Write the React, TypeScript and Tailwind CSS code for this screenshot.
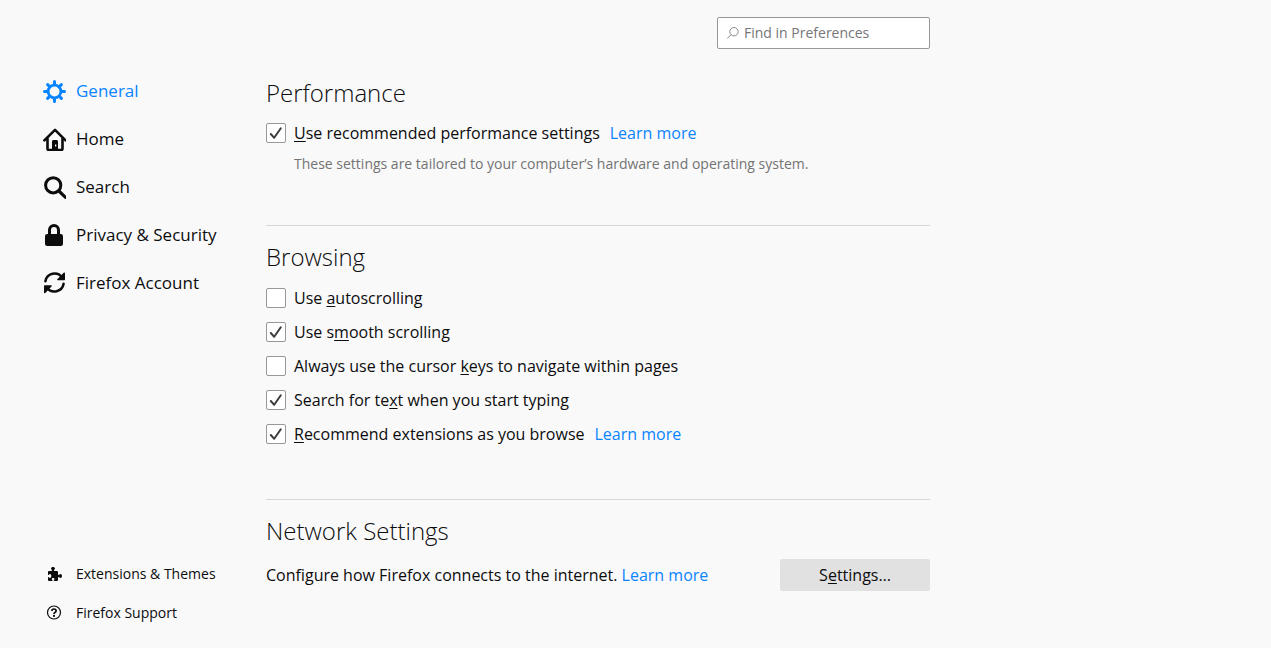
import { useState } from 'react';
import type { ReactNode } from 'react';

function GearIcon() {
  return (
    <svg viewBox="0 0 24 24" className="size-6" fill="none" stroke="currentColor" strokeLinecap="round">
      <circle cx="12.5" cy="12.5" r="6.4" strokeWidth="2.8" />
      <g strokeWidth="3">
        <path d="M12.5 2.500v3M12.5 19.500v3M2.500 12.5h3M19.500 12.5h3" />
        <path d="M5.600 5.600l2 2M17.400 17.400l2 2M19.400 5.600l-2 2M7.600 17.400l-2 2" />
      </g>
    </svg>
  );
}

function HomeIcon() {
  return (
    <svg viewBox="0 0 24 24" className="size-6" fill="none" stroke="currentColor" strokeLinecap="round" strokeLinejoin="round">
      <path d="M2.4 13.4L13 2.800l10.600 10.600" strokeWidth="2.6" />
      <path d="M5.500 12v9.600c0 .9.600 1.500 1.500 1.500h12c.9 0 1.500-.6 1.500-1.500V12" strokeWidth="2.600" />
      <path d="M10 23v-8.500c0-.9.600-1.500 1.500-1.500h3c.9 0 1.500.6 1.500 1.500V23z" fill="currentColor" stroke="none" />
      <path d="M13 17.500h1.300v2H13z" fill="#f9f9fa" stroke="none" />
    </svg>
  );
}

function SearchIcon() {
  return (
    <svg viewBox="0 0 24 24" className="size-6" fill="none" stroke="currentColor" strokeLinecap="round">
      <circle cx="11.200" cy="10.300" r="7.600" strokeWidth="3" />
      <path d="M16.900 16l6.400 6.200" strokeWidth="3.200" />
    </svg>
  );
}

function LockIcon() {
  return (
    <svg viewBox="0 0 24 24" className="size-6" fill="none" stroke="currentColor">
      <path d="M7.5 12V7a4.5 4.5 0 0 1 9 0v5" strokeWidth="3" />
      <rect x="3" y="11" width="18" height="12" rx="2.2" fill="currentColor" stroke="none" />
    </svg>
  );
}

function SyncIcon() {
  return (
    <svg viewBox="0 0 24 24" className="size-6" fill="none" stroke="currentColor" strokeLinecap="round">
      <path d="M3.4 10.200a9.300 9.300 0 0 1 16.600-4" strokeWidth="2.500" />
      <path d="M21.600 12.800a9.300 9.300 0 0 1-16.600 4" strokeWidth="2.500" />
      <path d="M21.700 1.700c.6-.6 1.300-.3 1.300.5v6.300c0 .5-.3.800-.8.800h-6.200c-.8 0-1.100-.7-.5-1.300z" fill="currentColor" stroke="none" />
      <path d="M3.300 21.900c-.6.600-1.300.3-1.300-.5v-6.300c0-.5.3-.8.800-.8H9c.8 0 1.100.7.500 1.300z" fill="currentColor" stroke="none" />
    </svg>
  );
}

function PuzzleIcon() {
  return (
    <svg viewBox="0 0 16 16" className="size-4" fill="currentColor">
      <path d="M14.5 8c-.97 0-1 1-1.5 1s-1-.25-1-.5V6a1 1 0 0 0-1-1H8.5C8.25 5 8 4.5 8 4s1-.53 1-1.5C9 1.7 8.1 1 7 1s-2 .7-2 1.500C5 3.470 6 3.500 6 4s-.25 1-.5 1H3a1 1 0 0 0-1 1v2.500c0 .25.250.5.500.5C3.200 9 3 8 4 8c.7 0 1.300.9 1.300 2S4.700 12 4 12c-1 0-.8-1-1.500-1-.25 0-.5.250-.5.500V14a1 1 0 0 0 1 1h3c.25 0 .5-.25.5-.5 0-.7-.8-.7-.8-1.500 0-.6.600-1 1.400-1s1.400.400 1.400 1c0 .8-.8.8-.8 1.500 0 .25.250.5.500.5H11a1 1 0 0 0 1-1v-2.500c0-.25.500-.5 1-.5s.53 1 1.500 1c.8 0 1.500-.9 1.500-2s-.7-2-1.500-2z" />
    </svg>
  );
}

function HelpIcon() {
  return (
    <svg viewBox="0 0 16 16" className="size-4" fill="none" stroke="currentColor">
      <circle cx="8" cy="7.5" r="6.500" strokeWidth="1.200" />
      <path d="M5.900 6C5.900 4.700 6.800 4 8 4s2.100.8 2.100 1.900c0 1.500-2.100 1.500-2.100 3" strokeWidth="1.700" />
      <circle cx="8" cy="10.900" r="1.100" fill="currentColor" stroke="none" />
    </svg>
  );
}

const categories = [
  { label: 'General', icon: <GearIcon /> },
  { label: 'Home', icon: <HomeIcon /> },
  { label: 'Search', icon: <SearchIcon /> },
  { label: 'Privacy & Security', icon: <LockIcon /> },
  { label: 'Firefox Account', icon: <SyncIcon /> },
];

function Key({ children }: { children: ReactNode }) {
  return <u className="decoration-1 underline-offset-2 [text-decoration-skip-ink:none]">{children}</u>;
}

function LearnMore() {
  return (
    <a href="#learn-more" className="text-[#0a84ff] hover:underline">
      Learn more
    </a>
  );
}

function Check({ initial = false, children, after }: { initial?: boolean; children: ReactNode; after?: ReactNode }) {
  const [checked, setChecked] = useState(initial);

  return (
    <div className="flex h-[34px] items-center gap-[10px]">
      <label className="flex items-center gap-2">
        <span className="grid size-5 shrink-0">
          <input
            type="checkbox"
            checked={checked}
            onChange={(e) => setChecked(e.target.checked)}
            className="col-start-1 row-start-1 size-5 appearance-none rounded-xs border border-[#98989a] bg-white"
          />
          {checked ? (
            <svg viewBox="0 0 20 20" className="pointer-events-none col-start-1 row-start-1 size-5" fill="none" stroke="#3d3d3f">
              <path d="M4.8 11l3.4 3.800 6.600-9.600" strokeWidth="2" strokeLinecap="round" strokeLinejoin="round" />
            </svg>
          ) : null}
        </span>
        <span>{children}</span>
      </label>
      {after}
    </div>
  );
}

function Heading({ children }: { children: ReactNode }) {
  return <h2 className="text-2xl font-light">{children}</h2>;
}

export default function App() {
  const [active, setActive] = useState('General');

  return (
    <div className="flex min-h-screen bg-[#f9f9fa] font-['Open_Sans','Noto_Sans',sans-serif] text-base text-[#0c0c0d]">
      <aside className="sticky top-0 flex h-screen w-[238px] shrink-0 flex-col justify-between pt-[67px] pb-4 pl-[42px]">
        <nav>
          {categories.map((c) => (
            <button
              key={c.label}
              type="button"
              onClick={() => setActive(c.label)}
              className={[
                'flex h-12 w-full items-center gap-[10px] text-[17px] whitespace-nowrap',
                active === c.label ? 'text-[#0a84ff]' : '',
              ].join(' ')}
            >
              {c.icon}
              <span>{c.label}</span>
            </button>
          ))}
        </nav>

        <div className="text-sm">
          <a href="#extensions" className="flex h-[39px] items-center gap-[10px]">
            <span className="flex w-6 justify-center">
              <PuzzleIcon />
            </span>
            Extensions &amp; Themes
          </a>
          <a href="#support" className="flex h-[39px] items-center gap-[10px]">
            <span className="flex w-6 justify-center">
              <HelpIcon />
            </span>
            Firefox Support
          </a>
        </div>
      </aside>

      <main className="min-w-0 flex-1 px-7 pt-[17px] pb-12">
        <div className="max-w-[664px]">
          <div className="flex justify-end">
            <label className="flex h-8 w-[213px] items-center gap-1 rounded-xs border border-[#98989a] bg-white px-2">
              <svg viewBox="0 0 14 14" className="size-[14px] shrink-0" fill="none" stroke="#8a8a8c">
                <circle cx="8" cy="5.7" r="4.200" />
                <path d="M5 8.700L1.200 12.500" />
              </svg>
              <input
                type="search"
                aria-label="Find in Preferences"
                placeholder="Find in Preferences"
                className="w-full min-w-0 bg-transparent text-sm outline-none placeholder:text-[#757577]"
              />
            </label>
          </div>

          <section className="pt-7 pb-[51px]">
            <Heading>Performance</Heading>
            <div className="mt-[7px]">
              <Check initial after={<LearnMore />}>
                <Key>U</Key>se recommended performance settings
              </Check>
            </div>
            <p className="mt-1 ml-7 text-sm text-[#737373]">
              These settings are tailored to your computer’s hardware and operating system.
            </p>
          </section>

          <section className="border-t border-[#d7d7db] pt-[15px] pb-12">
            <Heading>Browsing</Heading>
            <div className="mt-2">
              <Check>
                Use <Key>a</Key>utoscrolling
              </Check>
              <Check initial>
                Use s<Key>m</Key>ooth scrolling
              </Check>
              <Check>
                Always use the cursor <Key>k</Key>eys to navigate within pages
              </Check>
              <Check initial>
                Search for te<Key>x</Key>t when you start typing
              </Check>
              <Check initial after={<LearnMore />}>
                <Key>R</Key>ecommend extensions as you browse
              </Check>
            </div>
          </section>

          <section className="border-t border-[#d7d7db] pt-[15px]">
            <Heading>Network Settings</Heading>
            <div className="mt-3 flex items-center justify-between gap-4">
              <p>
                Configure how Firefox connects to the internet. <LearnMore />
              </p>
              <button type="button" className="h-8 w-[150px] shrink-0 rounded-xs bg-[#e1e1e2] hover:bg-[#d3d3d5]">
                S<Key>e</Key>ttings…
              </button>
            </div>
          </section>
        </div>
      </main>
    </div>
  );
}
